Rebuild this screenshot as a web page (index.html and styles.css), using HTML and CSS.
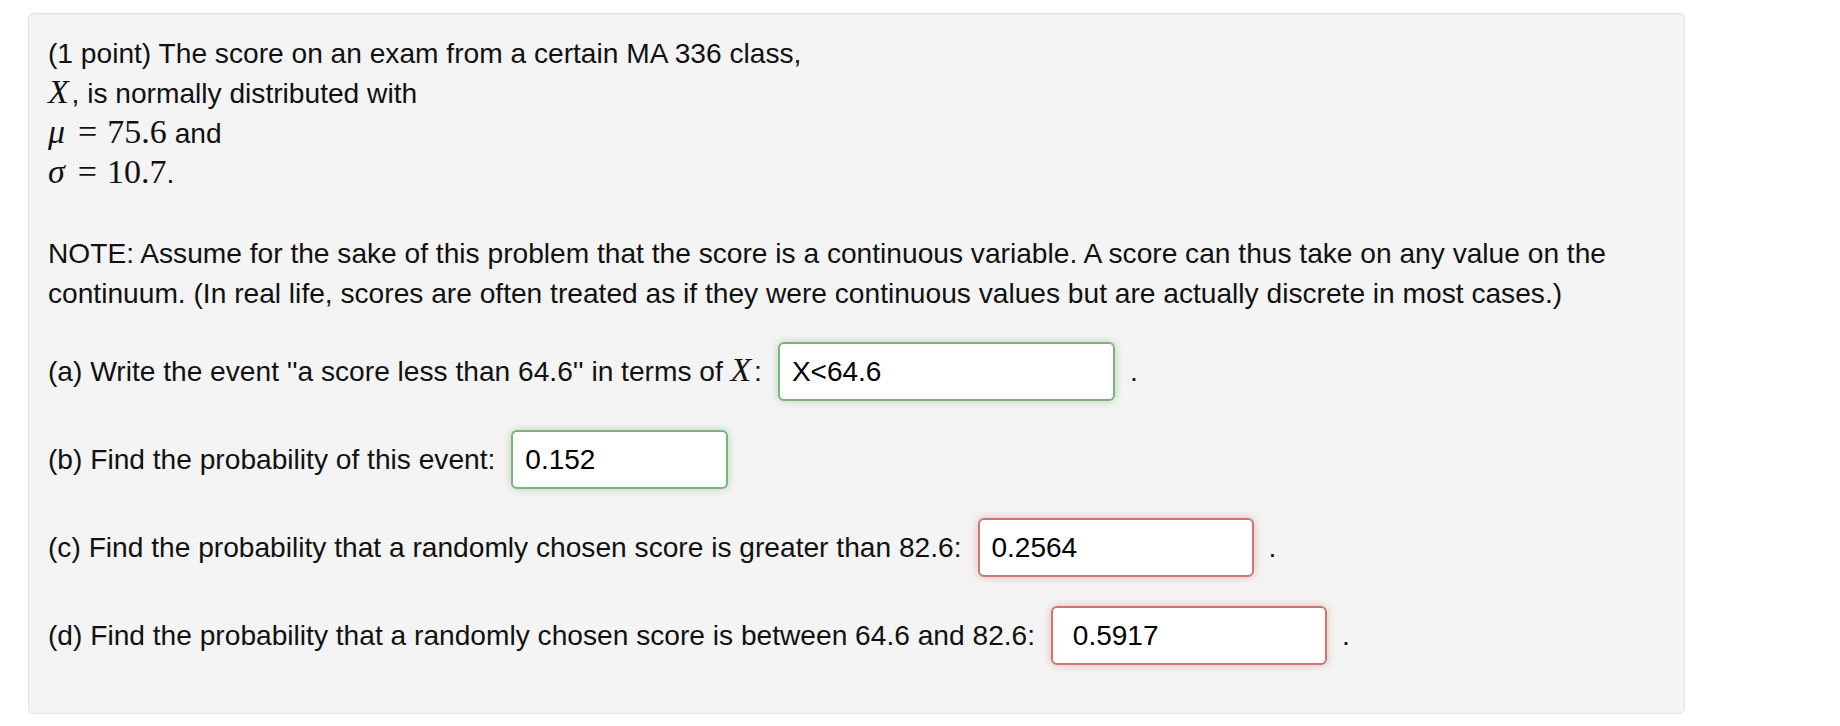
FILE: index.html
```html
<!DOCTYPE html>
<html>
<head>
<meta charset="utf-8">
<link rel="stylesheet" href="styles.css">
</head>
<body>
<div class="problem">
  <div class="intro">
    (1 point) The score on an exam from a certain MA 336 class,<br>
    <span class="math"><i class="mi">X</i></span>, is normally distributed with<br>
    <span class="math"><i class="mi">μ</i><span class="mo">=</span>75.6</span> and<br>
    <span class="math"><i class="mi">σ</i><span class="mo">=</span>10.7</span>.<br>
    <br>
    NOTE: Assume for the sake of this problem that the score is a continuous variable. A score can thus take on any value on the continuum. (In real life, scores are often treated as if they were continuous values but are actually discrete in most cases.)
  </div>
  <div class="row">
    <span class="label">(a) Write the event ''a score less than 64.6'' in terms of <span class="math"><i class="mi">X</i></span>:</span>
    <input class="answer correct wide" type="text" value="X&lt;64.6" readonly>
    <span class="dot">.</span>
  </div>
  <div class="row">
    <span class="label">(b) Find the probability of this event:</span>
    <input class="answer correct small" type="text" value="0.152" readonly>
  </div>
  <div class="row">
    <span class="label">(c) Find the probability that a randomly chosen score is greater than 82.6:</span>
    <input class="answer incorrect mid" type="text" value="0.2564" readonly>
    <span class="dot">.</span>
  </div>
  <div class="row">
    <span class="label">(d) Find the probability that a randomly chosen score is between 64.6 and 82.6:</span>
    <input class="answer incorrect mid" type="text" value=" 0.5917" readonly>
    <span class="dot">.</span>
  </div>
</div>
</body>
</html>
```
FILE: styles.css
```css
html, body {
  margin: 0;
  padding: 0;
  background: #ffffff;
}
body {
  font-family: "Liberation Sans", Arial, Helvetica, sans-serif;
  font-size: 28.15px;
  line-height: 40px;
  color: #111111;
}
.problem {
  box-sizing: border-box;
  width: 1657px;
  margin: 13px 0 0 28px;
  padding: 20px 19px 48px 19px;
  background: #f4f4f4;
  border: 1px solid #e3e3e3;
  border-radius: 5px;
  box-shadow: inset 0 1px 1px rgba(0, 0, 0, 0.04);
}
.math {
  font-family: "Liberation Serif", "Times New Roman", serif;
  font-size: 34px;
  line-height: 1;
}
.mi {
  font-style: italic;
  margin-right: 0.08em;
}
.mo {
  margin: 0 0.3em;
}
.row {
  display: flex;
  align-items: center;
  height: 59px;
  margin-top: 28px;
}
.row + .row {
  margin-top: 29px;
}
.label {
  white-space: nowrap;
}
.answer {
  box-sizing: border-box;
  height: 59px;
  margin: 0 0 0 16px;
  padding: 0 12px;
  font-family: "Liberation Sans", Arial, Helvetica, sans-serif;
  font-size: 28px;
  color: #000000;
  background: #ffffff;
  border-radius: 6px;
  outline: none;
}
.wide { width: 337px; }
.small { width: 217px; }
.mid { width: 276px; }
.correct {
  border: 2px solid #7ab47a;
  box-shadow: 0 0 9px rgba(90, 160, 90, 0.4);
}
.incorrect {
  border: 2px solid #d07474;
  box-shadow: 0 0 9px rgba(200, 90, 90, 0.4);
}
.dot {
  margin-left: 15px;
}
```
